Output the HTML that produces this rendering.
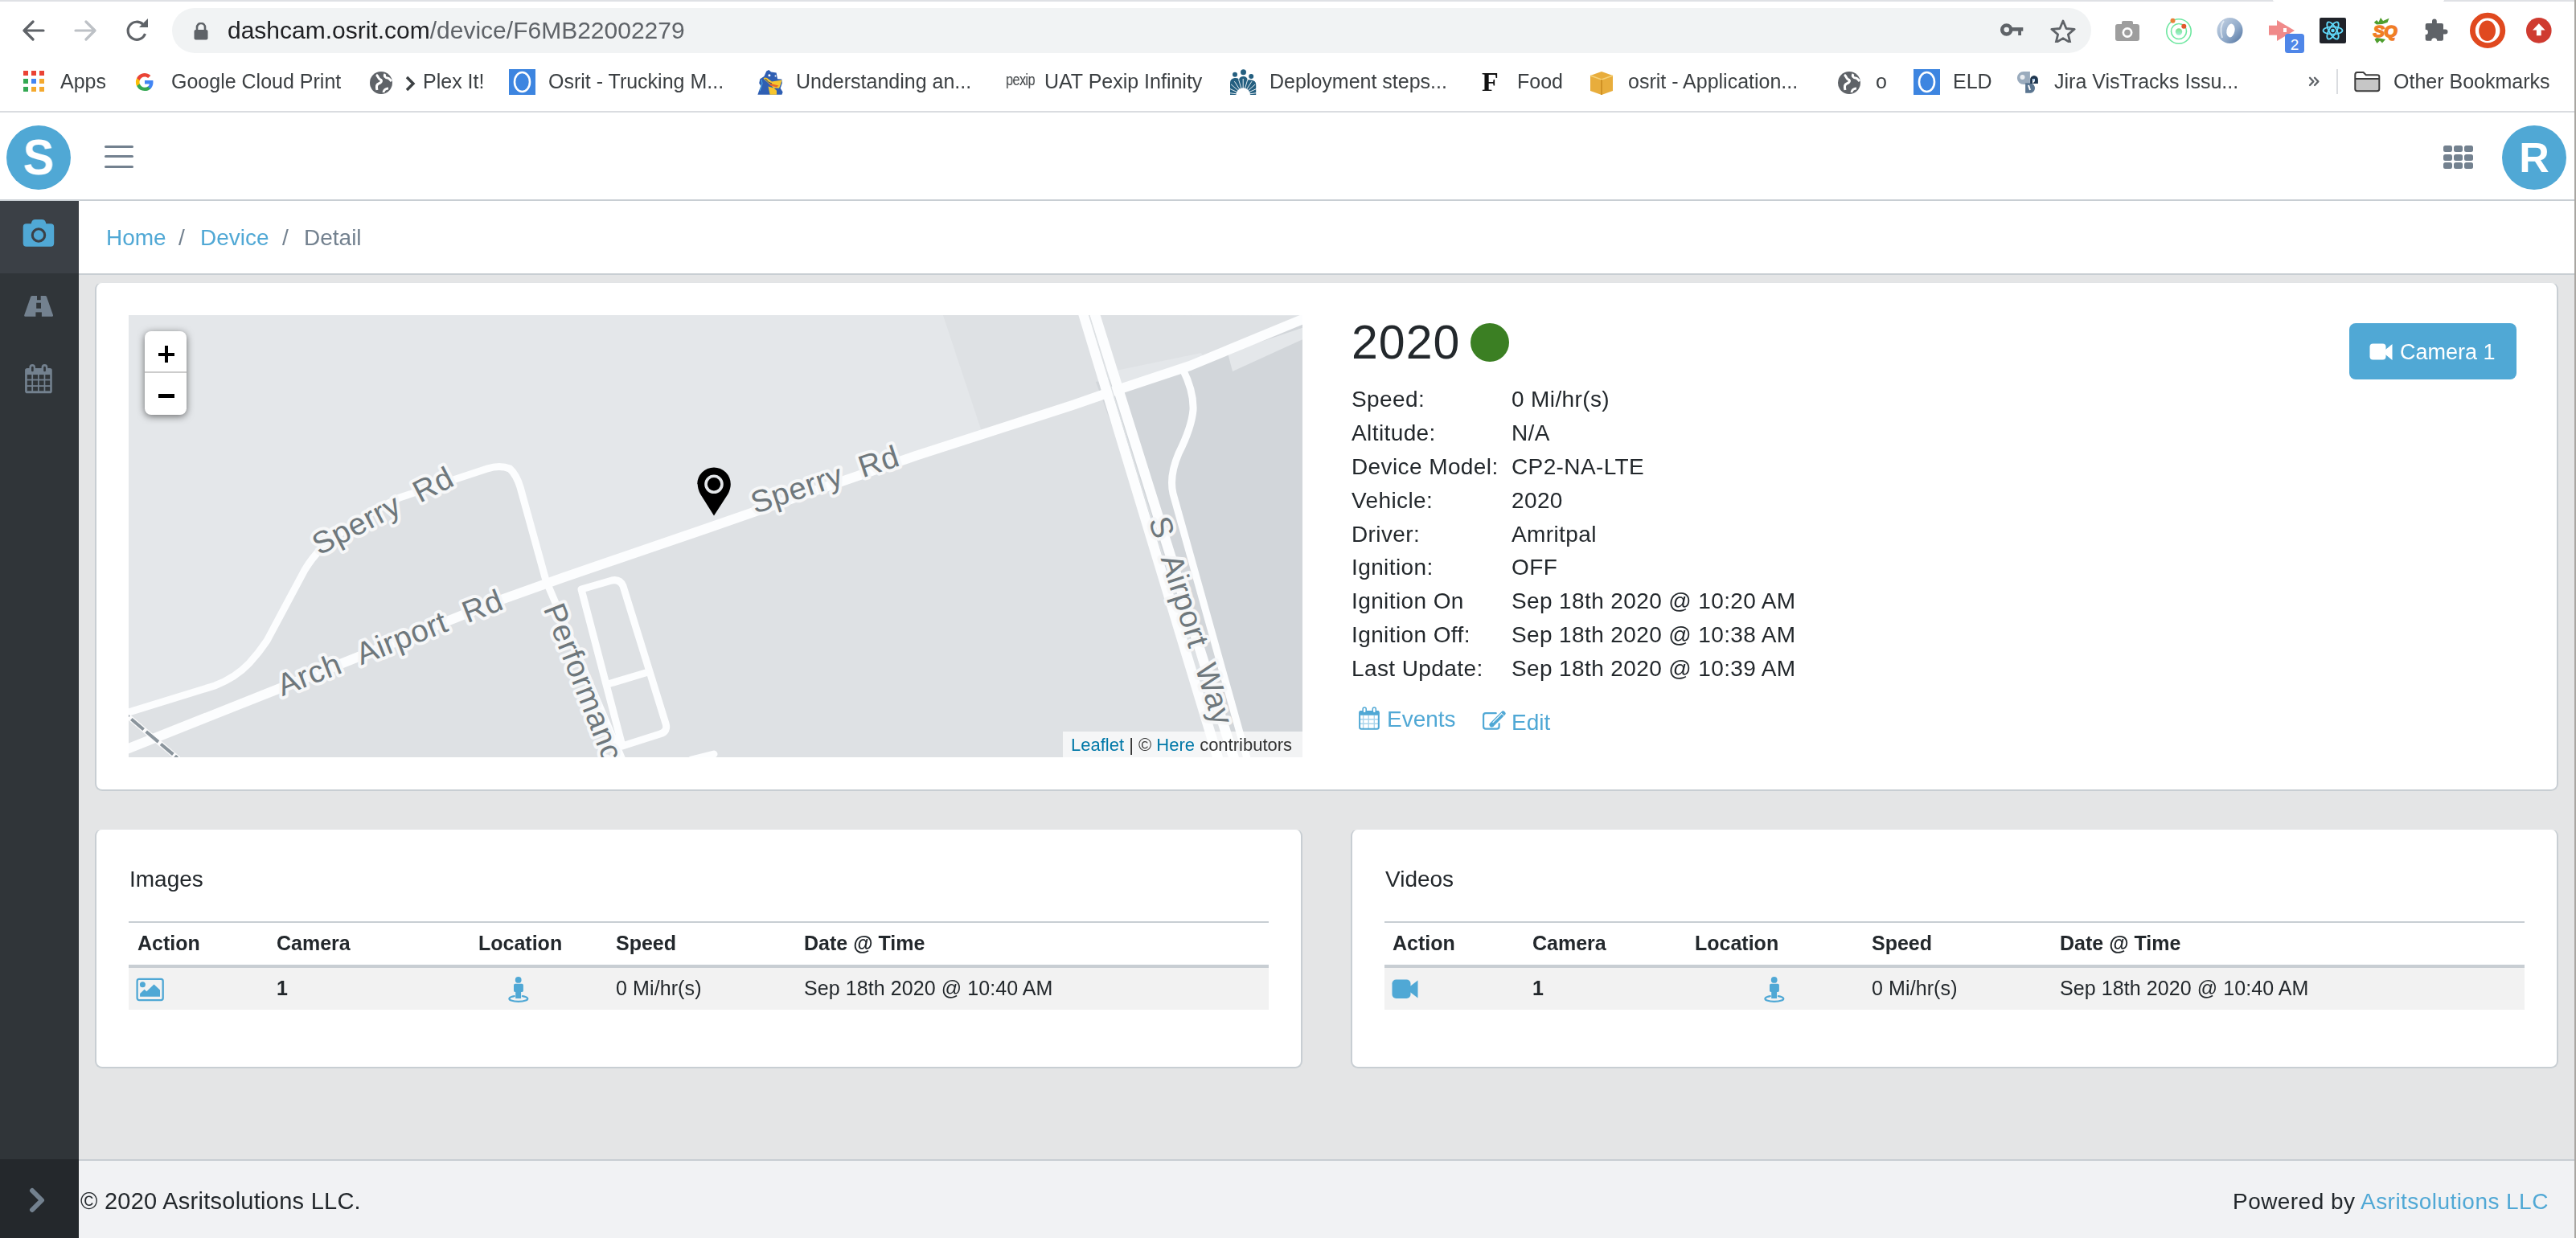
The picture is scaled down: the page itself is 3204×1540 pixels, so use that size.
<!DOCTYPE html>
<html><head><meta charset="utf-8"><title>Device Detail</title>
<style>
html,body{margin:0;padding:0;}
body{width:3204px;height:1540px;position:relative;overflow:hidden;background:#fff;font-family:"Liberation Sans",sans-serif;}
div{-webkit-font-smoothing:antialiased;}
</style></head><body>
<div style="position:absolute;left:0px;top:0px;width:3204px;height:2px;background:#dfe1e5;"></div>
<div style="position:absolute;left:2827px;top:0px;width:213px;height:2px;background:#fff;border-radius:0 0 2px 2px"></div>
<svg style="position:absolute;left:28px;top:25px;" width="28" height="26" viewBox="0 0 28 26"><path d="M26 13H3M13 2L2 13l11 11" fill="none" stroke="#5f6368" stroke-width="3.2" stroke-linecap="round" stroke-linejoin="round"/></svg>
<svg style="position:absolute;left:92px;top:25px;" width="28" height="26" viewBox="0 0 28 26"><path d="M2 13h23M15 2l11 11-11 11" fill="none" stroke="#bdc1c6" stroke-width="3.2" stroke-linecap="round" stroke-linejoin="round"/></svg>
<svg style="position:absolute;left:156px;top:23px;" width="30" height="30" viewBox="0 0 30 30"><path d="M24.5 19A11 11 0 1 1 22 7.5" fill="none" stroke="#5f6368" stroke-width="3.2"/><path d="M17 11L28 11 28 0Z" fill="#5f6368"/></svg>
<div style="position:absolute;left:214px;top:10px;width:2387px;height:56px;background:#f1f3f4;border-radius:28px"></div>
<svg style="position:absolute;left:241px;top:28px;" width="18" height="22" viewBox="0 0 18 22"><path d="M4 9V6a5 5 0 0 1 10 0v3" fill="none" stroke="#5f6368" stroke-width="2.6"/><rect x="0.5" y="9" width="17" height="12.5" rx="2" fill="#5f6368"/></svg>
<div style="position:absolute;left:283px;top:22.61px;font-size:30px;line-height:30px;color:#202124;font-weight:400;white-space:nowrap;font-family:'Liberation Sans', sans-serif;will-change:transform;"><span style="color:#202124">dashcam.osrit.com</span><span style="color:#5f6368">/device/F6MB22002279</span></div>
<svg style="position:absolute;left:2486px;top:28px;" width="32" height="20" viewBox="0 0 32 20"><circle cx="9.7" cy="8.9" r="5.5" fill="none" stroke="#5f6368" stroke-width="4.5"/><rect x="14.3" y="6.1" width="16" height="4.6" fill="#5f6368"/><rect x="24.2" y="10" width="3.8" height="6" fill="#5f6368"/></svg>
<svg style="position:absolute;left:2549px;top:23px;" width="34" height="30" viewBox="0 0 34 30"><path d="M17 3l4 9.5 10.2.8-7.8 6.6 2.4 10L17 24.6 8.2 29.9l2.4-10L2.8 13.3 13 12.5z" fill="none" stroke="#5f6368" stroke-width="2.8" stroke-linejoin="round"/></svg>
<svg style="position:absolute;left:2630px;top:25px;" width="32" height="27" viewBox="0 0 32 27"><rect x="1" y="5" width="30" height="21" rx="3" fill="#9e9e9e"/><rect x="9" y="1" width="14" height="6" rx="2" fill="#9e9e9e"/><circle cx="16" cy="15.5" r="6.5" fill="#fff"/><circle cx="16" cy="15.5" r="3.8" fill="#9e9e9e"/></svg>
<svg style="position:absolute;left:2692px;top:21px;" width="36" height="36" viewBox="0 0 36 36"><defs><linearGradient id="gg" x1="0" y1="0" x2="0" y2="1"><stop offset="0" stop-color="#7de08a"/><stop offset="1" stop-color="#9ff0d8"/></linearGradient></defs><circle cx="18" cy="18" r="15.2" fill="none" stroke="#6ee7a0" stroke-width="1.6"/><circle cx="18" cy="18" r="9.5" fill="none" stroke="#6ee7a0" stroke-width="1.6"/><circle cx="18" cy="18.5" r="4.2" fill="url(#gg)"/><circle cx="10.5" cy="4.8" r="3" fill="#e8823a"/><circle cx="24.3" cy="11.8" r="3" fill="#e2582e"/></svg>
<svg style="position:absolute;left:2756px;top:21px;" width="36" height="34" viewBox="0 0 36 34"><defs><linearGradient id="bo" x1="0" y1="0" x2="1" y2="1"><stop offset="0" stop-color="#c9d6e6"/><stop offset="0.6" stop-color="#8ea8c8"/><stop offset="1" stop-color="#4d6f9c"/></linearGradient></defs><ellipse cx="17.5" cy="17" rx="16" ry="16" fill="url(#bo)"/><ellipse cx="18.5" cy="17" rx="5" ry="8.5" fill="#fff" transform="rotate(10 18.5 17)"/><path d="M10 5Q4 12 8 26" stroke="#eef3f9" stroke-width="2" fill="none" opacity="0.7"/></svg>
<svg style="position:absolute;left:2820px;top:24px;" width="50" height="44" viewBox="0 0 50 44"><rect x="2" y="7.7" width="10" height="12" fill="#f08a8a"/><path d="M12 1L34 14 12 27Z" fill="#f08a8a"/><rect x="20" y="11" width="4" height="5" fill="#fff"/><rect x="22" y="17.9" width="24" height="24" rx="3.5" fill="#4f86e8"/><text x="34" y="37.5" font-family="Liberation Sans" font-size="19" font-weight="400" fill="#fff" text-anchor="middle">2</text></svg>
<svg style="position:absolute;left:2885px;top:22px;" width="33" height="32" viewBox="0 0 33 32"><rect width="33" height="32" rx="2" fill="#20232a"/><g fill="none" stroke="#61dafb" stroke-width="1.8"><ellipse cx="16.5" cy="16" rx="12" ry="4.6"/><ellipse cx="16.5" cy="16" rx="12" ry="4.6" transform="rotate(60 16.5 16)"/><ellipse cx="16.5" cy="16" rx="12" ry="4.6" transform="rotate(-60 16.5 16)"/></g><circle cx="16.5" cy="16" r="2.3" fill="#61dafb"/></svg>
<svg style="position:absolute;left:2950px;top:21px;" width="36" height="34" viewBox="0 0 36 34"><path d="M2.8 7L6 4 8.5 6.5 11 0.9 14 5 21.5 1.7 19.5 7 13 9 6 9.5Z" fill="#4f9e2e"/><path d="M3.5 28L6.5 33 10 29.5 13 32.5 17 28 12 27 6 26Z" fill="#4f9e2e"/><text x="16.5" y="24.5" font-family="Liberation Sans" font-size="21" font-weight="700" font-style="italic" fill="#f07e26" stroke="#f07e26" stroke-width="1.6" text-anchor="middle" letter-spacing="-0.5">SQ</text></svg>
<svg style="position:absolute;left:3015px;top:23px;" width="30" height="30" viewBox="0 0 30 30"><path d="M1.7 8Q1.7 5.9 3.8 5.9H10V3.5A2.9 2.9 0 0 1 15.8 3.5V5.9H21.9Q24 5.9 24 8V13.6H26.5A3 3 0 0 1 26.5 19.6H24V25.7Q24 27.8 21.9 27.8H16.2A3.5 3.5 0 0 0 9.2 27.8H3.8Q1.7 27.8 1.7 25.7V20.1A3.2 3.2 0 0 0 1.7 13.7Z" fill="#5f6368"/></svg>
<svg style="position:absolute;left:3070px;top:15px;" width="48" height="46" viewBox="0 0 48 46"><circle cx="24.1" cy="22.9" r="18.7" fill="none" stroke="#e0491f" stroke-width="6.8"/><ellipse cx="23.6" cy="23.2" rx="10.4" ry="12.7" fill="#e0491f"/></svg>
<svg style="position:absolute;left:3140px;top:21px;" width="35" height="34" viewBox="0 0 35 34"><circle cx="17.8" cy="16.9" r="15.8" fill="#cf3b30"/><path d="M17.8 8.3l-7.8 8.2h4.9v6.8h5.8v-6.8h4.9z" fill="#fff"/></svg>
<svg style="position:absolute;left:29px;top:88px;" width="26" height="26" viewBox="0 0 26 26"><rect x="0" y="0" width="6" height="6" fill="#ea4335"/><rect x="10" y="0" width="6" height="6" fill="#ea4335"/><rect x="20" y="0" width="6" height="6" fill="#ea4335"/><rect x="0" y="10" width="6" height="6" fill="#34a853"/><rect x="10" y="10" width="6" height="6" fill="#4285f4"/><rect x="20" y="10" width="6" height="6" fill="#f4a92f"/><rect x="0" y="20" width="6" height="6" fill="#34a853"/><rect x="10" y="20" width="6" height="6" fill="#f4a92f"/><rect x="20" y="20" width="6" height="6" fill="#f4a92f"/></svg>
<div style="position:absolute;left:75px;top:88.84px;font-size:25px;line-height:25px;color:#3c4043;font-weight:400;white-space:nowrap;font-family:'Liberation Sans', sans-serif;will-change:transform;">Apps</div>
<svg style="position:absolute;left:167px;top:89px;" width="26" height="26" viewBox="0 0 26 26"><path d="M23.5 13.3c0-.8-.1-1.6-.2-2.3H13v4.4h5.9a5 5 0 0 1-2.2 3.3v2.7h3.6c2.1-1.9 3.2-4.8 3.2-8.1z" fill="#4285f4"/><path d="M13 24c3 0 5.5-1 7.3-2.6l-3.6-2.7c-1 .7-2.2 1.1-3.7 1.1-2.9 0-5.3-1.9-6.2-4.5H3.1v2.8A11 11 0 0 0 13 24z" fill="#34a853"/><path d="M6.8 15.3a6.6 6.6 0 0 1 0-4.2V8.3H3.1a11 11 0 0 0 0 9.8z" fill="#fbbc05"/><path d="M13 6.4c1.6 0 3.1.6 4.2 1.7l3.2-3.2A11 11 0 0 0 3.1 8.3l3.7 2.8C7.7 8.4 10.1 6.4 13 6.4z" fill="#ea4335"/></svg>
<div style="position:absolute;left:213px;top:88.84px;font-size:25px;line-height:25px;color:#3c4043;font-weight:400;white-space:nowrap;font-family:'Liberation Sans', sans-serif;will-change:transform;">Google Cloud Print</div>
<svg style="position:absolute;left:459px;top:88px;" width="30" height="30" viewBox="0 0 30 30"><circle cx="15" cy="15" r="14" fill="#5f6368"/><path d="M9 5c3 2 2 5 5 6s1 4-2 5-3 4-2 8M20 4c-2 3 1 5 3 5s3 2 5 4M18 27c0-3 3-5 6-5" stroke="#fff" stroke-width="3" fill="none"/></svg>
<svg style="position:absolute;left:503px;top:94px;" width="14" height="20" viewBox="0 0 14 20"><path d="M3 2l8 8-8 8" fill="none" stroke="#3c4043" stroke-width="3.4"/></svg>
<div style="position:absolute;left:526px;top:88.84px;font-size:25px;line-height:25px;color:#3c4043;font-weight:400;white-space:nowrap;font-family:'Liberation Sans', sans-serif;will-change:transform;">Plex It!</div>
<svg style="position:absolute;left:633px;top:86px;" width="33" height="32" viewBox="0 0 33 32"><rect width="33" height="32" fill="#3d85e0"/><ellipse cx="16.5" cy="16" rx="9.5" ry="12" fill="none" stroke="#fff" stroke-width="2.6"/></svg>
<div style="position:absolute;left:682px;top:88.84px;font-size:25px;line-height:25px;color:#3c4043;font-weight:400;white-space:nowrap;font-family:'Liberation Sans', sans-serif;will-change:transform;">Osrit - Trucking M...</div>
<svg style="position:absolute;left:942px;top:86px;" width="32" height="33" viewBox="0 0 32 33"><path d="M0.4 31.8L2 27 4.4 21 2.2 17.6 3.3 12.2 8.4 8.9 11.3 2.4 14.2 0.9 17.1 3.5 23.6 4.5 25.1 12.2 30.2 12.5 30.9 17.3 28.7 23.8 31.6 28.5 30.5 31.8Z" fill="#2f5fb3"/><path d="M3 27L6 18 5 13" stroke="#4aa3e0" stroke-width="1.2" fill="none"/><path d="M7.6 11.8Q9 9.5 12 11L18 15.5 30.5 13.6 29 19 27 23.8Q20 24 13.5 21.6L15.6 31.8H24V26.7" fill="#f7c62f"/><path d="M14.2 17.3L26.5 20.5 24 22.4 16 20.5Z" fill="#e8672a"/><circle cx="14.9" cy="7.8" r="1.5" fill="#fff"/><circle cx="22.5" cy="8.5" r="1" fill="#fff"/><path d="M10 12Q13 17 18 18" stroke="#1d3f7a" stroke-width="1" fill="none"/></svg>
<div style="position:absolute;left:990px;top:88.84px;font-size:25px;line-height:25px;color:#3c4043;font-weight:400;white-space:nowrap;font-family:'Liberation Sans', sans-serif;will-change:transform;">Understanding an...</div>
<div style="position:absolute;left:1251px;top:89.07px;font-size:20px;line-height:20px;color:#3c4043;font-weight:400;white-space:nowrap;font-family:'Liberation Sans', sans-serif;will-change:transform;letter-spacing:-0.8px;transform:scaleX(0.82);transform-origin:left">pexip</div>
<div style="position:absolute;left:1299px;top:88.84px;font-size:25px;line-height:25px;color:#3c4043;font-weight:400;white-space:nowrap;font-family:'Liberation Sans', sans-serif;will-change:transform;">UAT Pexip Infinity</div>
<svg style="position:absolute;left:1530px;top:86px;" width="33" height="33" viewBox="0 0 33 33"><g fill="#245f80"><circle cx="6" cy="6.7" r="3"/><circle cx="16.5" cy="3.8" r="3.5"/><circle cx="26.2" cy="8.9" r="3"/><path d="M0 32V17Q0 12 5.6 11.1Q10 10.5 11 13Q12 9 16.5 8.9Q21 9 22 13.5Q24 13 26.4 13.6Q32.2 14.5 32.2 19V32H24.9A8.7 8.7 0 0 0 7.5 32Z"/></g><path d="M16.2 32L-3.6 29.2M16.2 32L-2.0 23.7M16.2 32L1.1 18.9M16.2 32L5.4 15.2M16.2 32L10.6 12.8M16.2 32L16.2 12.0M16.2 32L21.8 12.8M16.2 32L27.0 15.2M16.2 32L31.3 18.9M16.2 32L34.4 23.7M16.2 32L36.0 29.2" stroke="#fff" stroke-width="0.9"/></svg>
<div style="position:absolute;left:1579px;top:88.84px;font-size:25px;line-height:25px;color:#3c4043;font-weight:400;white-space:nowrap;font-family:'Liberation Sans', sans-serif;will-change:transform;">Deployment steps...</div>
<div style="position:absolute;left:1843px;top:85.22px;font-size:34px;line-height:34px;color:#111;font-weight:700;white-space:nowrap;font-family:'Liberation Serif', serif;will-change:transform;">F</div>
<div style="position:absolute;left:1887px;top:88.84px;font-size:25px;line-height:25px;color:#3c4043;font-weight:400;white-space:nowrap;font-family:'Liberation Sans', sans-serif;will-change:transform;">Food</div>
<svg style="position:absolute;left:1977px;top:88px;" width="30" height="30" viewBox="0 0 30 30"><path d="M1 6L15 1 29 6v19L15 30 1 25z" fill="#e8ad3c"/><path d="M1 6l14 5 14-5" fill="none" stroke="#f6d27a" stroke-width="1.5"/><path d="M15 11v19" stroke="#c98a1d" stroke-width="1.5"/></svg>
<div style="position:absolute;left:2025px;top:88.84px;font-size:25px;line-height:25px;color:#3c4043;font-weight:400;white-space:nowrap;font-family:'Liberation Sans', sans-serif;will-change:transform;">osrit - Application...</div>
<svg style="position:absolute;left:2285px;top:88px;" width="30" height="30" viewBox="0 0 30 30"><circle cx="15" cy="15" r="14" fill="#5f6368"/><path d="M9 5c3 2 2 5 5 6s1 4-2 5-3 4-2 8M20 4c-2 3 1 5 3 5s3 2 5 4M18 27c0-3 3-5 6-5" stroke="#fff" stroke-width="3" fill="none"/></svg>
<div style="position:absolute;left:2333px;top:88.84px;font-size:25px;line-height:25px;color:#3c4043;font-weight:400;white-space:nowrap;font-family:'Liberation Sans', sans-serif;will-change:transform;">o</div>
<svg style="position:absolute;left:2380px;top:86px;" width="33" height="32" viewBox="0 0 33 32"><rect width="33" height="32" fill="#3d85e0"/><ellipse cx="16.5" cy="16" rx="9.5" ry="12" fill="none" stroke="#fff" stroke-width="2.6"/></svg>
<div style="position:absolute;left:2429px;top:88.84px;font-size:25px;line-height:25px;color:#3c4043;font-weight:400;white-space:nowrap;font-family:'Liberation Sans', sans-serif;will-change:transform;">ELD</div>
<svg style="position:absolute;left:2507px;top:87px;" width="30" height="30" viewBox="0 0 30 30"><path d="M1.9 10A8.1 8.1 0 0 0 10 18.1H17.9V1.9H10A8.1 8.1 0 0 0 1.9 10Z" fill="#9aabbd"/><circle cx="8.5" cy="9" r="3" fill="#fff" opacity="0.8"/><path d="M12.1 16.3V28.8H18.5A6.3 6.3 0 0 0 18.5 16.3Z" fill="#5a7590"/><path d="M16 19L18 25" stroke="#fff" stroke-width="2"/><path d="M27.9 17H18.1V12A5 5 0 0 1 23 7H23A5 5 0 0 1 27.9 12Z" fill="#1f3750"/><path d="M21 11H24V14L21 17Z" fill="#fff"/><rect x="22" y="11.5" width="1.6" height="1.6" fill="#4a90e2"/></svg>
<div style="position:absolute;left:2555px;top:88.84px;font-size:25px;line-height:25px;color:#3c4043;font-weight:400;white-space:nowrap;font-family:'Liberation Sans', sans-serif;will-change:transform;">Jira VisTracks Issu...</div>
<svg style="position:absolute;left:2871px;top:95px;" width="16" height="14" viewBox="0 0 16 14"><path d="M2 1.8L6.4 6.4 2 11M8 1.8L12.4 6.4 8 11" fill="none" stroke="#5f6368" stroke-width="2.3" stroke-linecap="round" stroke-linejoin="round"/></svg>
<div style="position:absolute;left:2906px;top:86px;width:2px;height:31px;background:#dadce0;"></div>
<svg style="position:absolute;left:2927px;top:88px;" width="34" height="27" viewBox="0 0 34 27"><path d="M2.3 10H32.3V22.8Q32.3 25.2 29.8 25.2H4.8Q2.3 25.2 2.3 22.8Z" fill="#c6c6c6"/><path d="M2.3 5Q2.3 2 5 2H12.5L15.8 5.2H29.8Q32.3 5.2 32.3 7.5V22.8Q32.3 25.2 29.8 25.2H4.8Q2.3 25.2 2.3 22.8Z" fill="none" stroke="#3c3c3c" stroke-width="2" stroke-linejoin="round"/><path d="M2.3 10H32.3" stroke="#3c3c3c" stroke-width="2"/></svg>
<div style="position:absolute;left:2977px;top:88.84px;font-size:25px;line-height:25px;color:#3c4043;font-weight:400;white-space:nowrap;font-family:'Liberation Sans', sans-serif;will-change:transform;">Other Bookmarks</div>
<div style="position:absolute;left:0px;top:138px;width:3204px;height:2px;background:#dadce0;"></div>
<div style="position:absolute;left:0px;top:248px;width:3202px;height:2px;background:#c8ced3;"></div>
<div style="position:absolute;left:8px;top:156px;width:80px;height:80px;border-radius:50%;background:#50a8d5"></div>
<div style="position:absolute;left:8px;top:164.17px;font-size:63px;line-height:63px;color:#fff;font-weight:700;white-space:nowrap;font-family:'Liberation Sans', sans-serif;will-change:transform;width:80px;text-align:center;transform:scaleX(0.92)">S</div>
<div style="position:absolute;left:129.7px;top:181.3px;width:36.400000000000006px;height:3.1999999999999886px;background:#73818f;border-radius:2px"></div>
<div style="position:absolute;left:129.7px;top:193.3px;width:36.400000000000006px;height:3.1999999999999886px;background:#73818f;border-radius:2px"></div>
<div style="position:absolute;left:129.7px;top:205.8px;width:36.400000000000006px;height:3.1999999999999886px;background:#73818f;border-radius:2px"></div>
<div style="position:absolute;left:3039.0px;top:181.0px;width:10.5px;height:8.0px;background:#73818f;border-radius:2.5px"></div>
<div style="position:absolute;left:3052.2px;top:181.0px;width:10.5px;height:8.0px;background:#73818f;border-radius:2.5px"></div>
<div style="position:absolute;left:3065.4px;top:181.0px;width:10.5px;height:8.0px;background:#73818f;border-radius:2.5px"></div>
<div style="position:absolute;left:3039.0px;top:191.6px;width:10.5px;height:8.0px;background:#73818f;border-radius:2.5px"></div>
<div style="position:absolute;left:3052.2px;top:191.6px;width:10.5px;height:8.0px;background:#73818f;border-radius:2.5px"></div>
<div style="position:absolute;left:3065.4px;top:191.6px;width:10.5px;height:8.0px;background:#73818f;border-radius:2.5px"></div>
<div style="position:absolute;left:3039.0px;top:202.2px;width:10.5px;height:8.0px;background:#73818f;border-radius:2.5px"></div>
<div style="position:absolute;left:3052.2px;top:202.2px;width:10.5px;height:8.0px;background:#73818f;border-radius:2.5px"></div>
<div style="position:absolute;left:3065.4px;top:202.2px;width:10.5px;height:8.0px;background:#73818f;border-radius:2.5px"></div>
<div style="position:absolute;left:3112px;top:156px;width:80px;height:80px;border-radius:50%;background:#50a8d5"></div>
<div style="position:absolute;left:3112px;top:169.98px;font-size:52px;line-height:52px;color:#fff;font-weight:700;white-space:nowrap;font-family:'Liberation Sans', sans-serif;will-change:transform;width:80px;text-align:center">R</div>
<div style="position:absolute;left:0px;top:250px;width:98px;height:1290px;background:#303539;"></div>
<div style="position:absolute;left:0px;top:250px;width:98px;height:90px;background:#3b4046;"></div>
<div style="position:absolute;left:0px;top:1442px;width:98px;height:98px;background:#24282c;"></div>
<div style="position:absolute;left:98px;top:250px;width:3104px;height:90px;background:#fff;"></div>
<div style="position:absolute;left:98px;top:340px;width:3104px;height:2px;background:#c8ced3;"></div>
<div style="position:absolute;left:98px;top:342px;width:3104px;height:1100px;background:#e4e5e6;"></div>
<div style="position:absolute;left:98px;top:1442px;width:3104px;height:2px;background:#c8ced3;"></div>
<div style="position:absolute;left:98px;top:1444px;width:3104px;height:96px;background:#f1f2f4;"></div>
<div style="position:absolute;left:3202px;top:0px;width:2px;height:1540px;background:#a9a6a2;"></div>
<div style="position:absolute;left:118px;top:351px;width:3064px;height:633px;background:#fff;border:2px solid #c8ced3;border-top:1px solid #e2e4e6;border-radius:9px;box-sizing:border-box"></div>
<div style="position:absolute;left:118px;top:1031px;width:1502px;height:298px;background:#fff;border:2px solid #c8ced3;border-top:1px solid #e2e4e6;border-radius:9px;box-sizing:border-box"></div>
<div style="position:absolute;left:1680px;top:1031px;width:1502px;height:298px;background:#fff;border:2px solid #c8ced3;border-top:1px solid #e2e4e6;border-radius:9px;box-sizing:border-box"></div>
<svg style="position:absolute;left:28px;top:272px;" width="40" height="36" viewBox="0 0 40 36"><path d="M10.8 6.3Q11.5 0.9 16 0.9H24Q28.6 0.9 29.3 6.3H35Q39.2 6.3 39.2 10.5V30.6Q39.2 34.8 35 34.8H4.9Q0.7 34.8 0.7 30.6V10.5Q0.7 6.3 4.9 6.3Z" fill="#50a8d5"/><circle cx="20" cy="20.5" r="7.7" fill="none" stroke="#3b4046" stroke-width="3.1"/></svg>
<svg style="position:absolute;left:29px;top:367px;" width="38" height="28" viewBox="0 0 38 28"><path d="M11 1.1H27.3Q28.5 1.1 29 2.2L37 25Q37.3 26.7 36 26.7H2.3Q0.7 26.7 1.2 25L9.2 2.2Q9.7 1.1 11 1.1Z" fill="#73818f"/><rect x="17" y="0" width="4.7" height="6.2" fill="#303539"/><rect x="16.2" y="9.7" width="5.8" height="7" fill="#303539"/><rect x="15.4" y="21.4" width="7.5" height="6" fill="#303539"/></svg>
<svg style="position:absolute;left:30px;top:452px;" width="36" height="38" viewBox="0 0 36 38"><rect x="1.1" y="6.1" width="33.7" height="31.1" rx="2.8" fill="#73818f"/><rect x="3.8" y="14.1" width="5.5" height="5.5" fill="#303539"/><rect x="3.8" y="21.4" width="5.5" height="5.8" fill="#303539"/><rect x="3.8" y="29" width="5.5" height="5.3" fill="#303539"/><rect x="11.1" y="14.1" width="5.9" height="5.5" fill="#303539"/><rect x="11.1" y="21.4" width="5.9" height="5.8" fill="#303539"/><rect x="11.1" y="29" width="5.9" height="5.3" fill="#303539"/><rect x="18.7" y="14.1" width="5.9" height="5.5" fill="#303539"/><rect x="18.7" y="21.4" width="5.9" height="5.8" fill="#303539"/><rect x="18.7" y="29" width="5.9" height="5.3" fill="#303539"/><rect x="26.3" y="14.1" width="5.9" height="5.5" fill="#303539"/><rect x="26.3" y="21.4" width="5.9" height="5.8" fill="#303539"/><rect x="26.3" y="29" width="5.9" height="5.3" fill="#303539"/><rect x="6.4" y="0.9" width="7.6" height="9.9" rx="3.8" fill="#73818f"/><rect x="9" y="3.8" width="2.7" height="6.4" rx="1.3" fill="#303539"/><rect x="21.6" y="0.9" width="7.7" height="9.9" rx="3.8" fill="#73818f"/><rect x="24.2" y="3.8" width="2.7" height="6.4" rx="1.3" fill="#303539"/></svg>
<svg style="position:absolute;left:36px;top:1477px;" width="22" height="32" viewBox="0 0 22 32"><path d="M4 4L16 16 4 28" fill="none" stroke="#73818f" stroke-width="6" stroke-linecap="round" stroke-linejoin="round"/></svg>
<div style="position:absolute;left:132px;top:282.30px;font-size:28px;line-height:28px;color:#50a8d5;font-weight:400;white-space:nowrap;font-family:'Liberation Sans', sans-serif;will-change:transform;">Home</div>
<div style="position:absolute;left:222px;top:282.30px;font-size:28px;line-height:28px;color:#73818f;font-weight:400;white-space:nowrap;font-family:'Liberation Sans', sans-serif;will-change:transform;">/</div>
<div style="position:absolute;left:249px;top:282.30px;font-size:28px;line-height:28px;color:#50a8d5;font-weight:400;white-space:nowrap;font-family:'Liberation Sans', sans-serif;will-change:transform;">Device</div>
<div style="position:absolute;left:351px;top:282.30px;font-size:28px;line-height:28px;color:#73818f;font-weight:400;white-space:nowrap;font-family:'Liberation Sans', sans-serif;will-change:transform;">/</div>
<div style="position:absolute;left:378px;top:282.30px;font-size:28px;line-height:28px;color:#73818f;font-weight:400;white-space:nowrap;font-family:'Liberation Sans', sans-serif;will-change:transform;">Detail</div>
<div style="position:absolute;left:160px;top:392px;width:1460px;height:550px;background:#e4e7ea;overflow:hidden"><svg width="1460" height="550" viewBox="0 0 1460 550" style="position:absolute;left:0;top:0"><path d="M-5 494 L107 461 L144 440 L169 414 L219 317 L237.6 292 L337 227 L446 190 L462 187 L480 199 L487 221 L519 342 L-5 545Z" fill="#dee1e4"/><path d="M-5 541 L182 466.6 L461.6 354.6 L540 326.6 L720 265 L980 174.6 L1174 112 L1210 99.5 L1240 90 L1375 560 L-5 560Z" fill="#dee1e4"/><path d="M1012.6 -1 L1062 148 L1174 112 L1210 99.5 L1320 63 L1465 1 Z" fill="#dee1e4"/><path d="M1203 83 L1320 61 L1465 2 L1465 560 L1378 560 Z" fill="#d2d6da"/><path d="M1228 69 L1334 47 L1340 58 L1234 86Z" fill="#e4e7ea"/><path d="M1367 47 L1465 14 L1465 28 L1373 70Z" fill="#e4e7ea"/><path d="M-10 543 L182 466.6 L461.6 354.6 L540 326.6 L720 265 L980 174.6 L1174 112 L1210 99.5 L1320 63 L1470 1" fill="none" stroke="#fcfdfe" stroke-linecap="round" stroke-linejoin="round" stroke-width="12"/><path d="M-10 497 L107 461 Q133 451 150 433 Q162 420 172 405 L219 317 Q228 302 240 290 Q280 255 337 227 L446 191 Q462 186 474 191 Q482 198 487 214 L519 330 L614 553" fill="none" stroke="#fcfdfe" stroke-linecap="round" stroke-linejoin="round" stroke-width="9"/><path d="M563 341 L601 330 Q611 328 615 337 L668 508 Q671 518 661 521 L614 536 L563 341Z" fill="none" stroke="#fcfdfe" stroke-linecap="round" stroke-linejoin="round" stroke-width="9"/><path d="M596 459 L643 445" fill="none" stroke="#fcfdfe" stroke-linecap="round" stroke-linejoin="round" stroke-width="9"/><path d="M1186.4 -5 L1356 555" fill="none" stroke="#fcfdfe" stroke-linecap="round" stroke-linejoin="round" stroke-width="12.5"/><path d="M1200.5 -5 L1376 555" fill="none" stroke="#fcfdfe" stroke-linecap="round" stroke-linejoin="round" stroke-width="12.5"/><path d="M1193 -5 L1365 555" fill="none" stroke="#dde1e4" stroke-width="1.3"/><path d="M1311 67 Q1325 95 1324 118 Q1322 140 1306 172 Q1294 200 1299 222 L1392 555" fill="none" stroke="#fcfdfe" stroke-linecap="round" stroke-linejoin="round" stroke-width="9"/><path d="M700 553 L728 546" fill="none" stroke="#fcfdfe" stroke-linecap="round" stroke-linejoin="round" stroke-width="9"/><path d="M-2 498 L62 552" stroke="#fbfbfc" stroke-width="6.5" fill="none"/><path d="M-2 498 L62 552" stroke="#8a949c" stroke-width="4" stroke-dasharray="3 4 20 4 20 4 20" fill="none"/><text x="316" y="243" font-size="38.5" font-family="Liberation Sans, sans-serif" fill="#6e777c" stroke="#f6f7f8" stroke-width="8" paint-order="stroke" stroke-linejoin="round" dominant-baseline="central" text-anchor="middle" transform="rotate(-27.5 316 243)" letter-spacing="0.8">Sperry&#160;&#160;Rd</text><text x="325" y="407" font-size="38.5" font-family="Liberation Sans, sans-serif" fill="#6e777c" stroke="#f6f7f8" stroke-width="8" paint-order="stroke" stroke-linejoin="round" dominant-baseline="central" text-anchor="middle" transform="rotate(-21.5 325 407)" letter-spacing="0.8">Arch&#160;&#160;Airport&#160;&#160;Rd</text><text x="866" y="204" font-size="38.5" font-family="Liberation Sans, sans-serif" fill="#6e777c" stroke="#f6f7f8" stroke-width="8" paint-order="stroke" stroke-linejoin="round" dominant-baseline="central" text-anchor="middle" transform="rotate(-18.5 866 204)" letter-spacing="0.8">Sperry&#160;&#160;Rd</text><text x="528" y="360" font-size="38.5" font-family="Liberation Sans, sans-serif" fill="#6e777c" stroke="#f6f7f8" stroke-width="8" paint-order="stroke" stroke-linejoin="round" dominant-baseline="central" text-anchor="start" transform="rotate(68.5 528 360)" letter-spacing="0.8">Performance</text><text x="1322" y="380" font-size="38.5" font-family="Liberation Sans, sans-serif" fill="#6e777c" stroke="#f6f7f8" stroke-width="8" paint-order="stroke" stroke-linejoin="round" dominant-baseline="central" text-anchor="middle" transform="rotate(72.5 1322 380)" letter-spacing="0.8">S&#160;&#160;Airport&#160;&#160;Way</text><path d="M728 210.3 m-20.8 0 a20.8 20.8 0 1 1 41.6 0 q0 6 -3.5 12.5 L728 249.4 L711.2 222.8 q-3.5 -6.5 -3.5 -12.5Z" fill="#000"/><circle cx="728" cy="210.3" r="10" fill="none" stroke="#e4e7ea" stroke-width="3.6"/></svg></div>
<div style="position:absolute;left:180px;top:412px;width:52px;height:104px;background:#fff;border-radius:8px;box-shadow:0 2px 10px rgba(0,0,0,0.55)"></div>
<div style="position:absolute;left:180px;top:462px;width:52px;height:2px;background:#cccccc;"></div>
<div style="position:absolute;left:197px;top:438.5px;width:20px;height:4.0px;background:#000;"></div>
<div style="position:absolute;left:205px;top:430px;width:4px;height:21px;background:#000;"></div>
<div style="position:absolute;left:197px;top:490px;width:20px;height:4.5px;background:#000;"></div>
<div style="position:absolute;left:1322px;top:910px;width:298px;height:32px;background:rgba(255,255,255,0.7)"></div>
<div style="position:absolute;left:1332px;top:915.98px;font-size:22px;line-height:22px;color:#333;font-weight:400;white-space:nowrap;font-family:'Liberation Sans', sans-serif;will-change:transform;"><span style="color:#0078a8">Leaflet</span> | &copy; <span style="color:#0078a8">Here</span> contributors</div>
<div style="position:absolute;left:1681px;top:396.76px;font-size:59px;line-height:59px;color:#23282c;font-weight:400;white-space:nowrap;font-family:'Liberation Sans', sans-serif;will-change:transform;letter-spacing:1px">2020</div>
<div style="position:absolute;left:1829px;top:402px;width:48px;height:48px;border-radius:50%;background:#3b7f23"></div>
<div style="position:absolute;left:1681px;top:483.30px;font-size:28px;line-height:28px;color:#23282c;font-weight:400;white-space:nowrap;font-family:'Liberation Sans', sans-serif;will-change:transform;letter-spacing:0.4px">Speed:</div>
<div style="position:absolute;left:1880px;top:483.30px;font-size:28px;line-height:28px;color:#23282c;font-weight:400;white-space:nowrap;font-family:'Liberation Sans', sans-serif;will-change:transform;letter-spacing:0.38px">0 Mi/hr(s)</div>
<div style="position:absolute;left:1681px;top:525.10px;font-size:28px;line-height:28px;color:#23282c;font-weight:400;white-space:nowrap;font-family:'Liberation Sans', sans-serif;will-change:transform;letter-spacing:0.4px">Altitude:</div>
<div style="position:absolute;left:1880px;top:525.10px;font-size:28px;line-height:28px;color:#23282c;font-weight:400;white-space:nowrap;font-family:'Liberation Sans', sans-serif;will-change:transform;letter-spacing:0.38px">N/A</div>
<div style="position:absolute;left:1681px;top:566.90px;font-size:28px;line-height:28px;color:#23282c;font-weight:400;white-space:nowrap;font-family:'Liberation Sans', sans-serif;will-change:transform;letter-spacing:0.4px">Device Model:</div>
<div style="position:absolute;left:1880px;top:566.90px;font-size:28px;line-height:28px;color:#23282c;font-weight:400;white-space:nowrap;font-family:'Liberation Sans', sans-serif;will-change:transform;letter-spacing:0.38px">CP2-NA-LTE</div>
<div style="position:absolute;left:1681px;top:608.70px;font-size:28px;line-height:28px;color:#23282c;font-weight:400;white-space:nowrap;font-family:'Liberation Sans', sans-serif;will-change:transform;letter-spacing:0.4px">Vehicle:</div>
<div style="position:absolute;left:1880px;top:608.70px;font-size:28px;line-height:28px;color:#23282c;font-weight:400;white-space:nowrap;font-family:'Liberation Sans', sans-serif;will-change:transform;letter-spacing:0.38px">2020</div>
<div style="position:absolute;left:1681px;top:650.50px;font-size:28px;line-height:28px;color:#23282c;font-weight:400;white-space:nowrap;font-family:'Liberation Sans', sans-serif;will-change:transform;letter-spacing:0.4px">Driver:</div>
<div style="position:absolute;left:1880px;top:650.50px;font-size:28px;line-height:28px;color:#23282c;font-weight:400;white-space:nowrap;font-family:'Liberation Sans', sans-serif;will-change:transform;letter-spacing:0.38px">Amritpal</div>
<div style="position:absolute;left:1681px;top:692.30px;font-size:28px;line-height:28px;color:#23282c;font-weight:400;white-space:nowrap;font-family:'Liberation Sans', sans-serif;will-change:transform;letter-spacing:0.4px">Ignition:</div>
<div style="position:absolute;left:1880px;top:692.30px;font-size:28px;line-height:28px;color:#23282c;font-weight:400;white-space:nowrap;font-family:'Liberation Sans', sans-serif;will-change:transform;letter-spacing:0.38px">OFF</div>
<div style="position:absolute;left:1681px;top:734.10px;font-size:28px;line-height:28px;color:#23282c;font-weight:400;white-space:nowrap;font-family:'Liberation Sans', sans-serif;will-change:transform;letter-spacing:0.4px">Ignition On</div>
<div style="position:absolute;left:1880px;top:734.10px;font-size:28px;line-height:28px;color:#23282c;font-weight:400;white-space:nowrap;font-family:'Liberation Sans', sans-serif;will-change:transform;letter-spacing:0.38px">Sep 18th 2020 @ 10:20 AM</div>
<div style="position:absolute;left:1681px;top:775.90px;font-size:28px;line-height:28px;color:#23282c;font-weight:400;white-space:nowrap;font-family:'Liberation Sans', sans-serif;will-change:transform;letter-spacing:0.4px">Ignition Off:</div>
<div style="position:absolute;left:1880px;top:775.90px;font-size:28px;line-height:28px;color:#23282c;font-weight:400;white-space:nowrap;font-family:'Liberation Sans', sans-serif;will-change:transform;letter-spacing:0.38px">Sep 18th 2020 @ 10:38 AM</div>
<div style="position:absolute;left:1681px;top:817.70px;font-size:28px;line-height:28px;color:#23282c;font-weight:400;white-space:nowrap;font-family:'Liberation Sans', sans-serif;will-change:transform;letter-spacing:0.4px">Last Update:</div>
<div style="position:absolute;left:1880px;top:817.70px;font-size:28px;line-height:28px;color:#23282c;font-weight:400;white-space:nowrap;font-family:'Liberation Sans', sans-serif;will-change:transform;letter-spacing:0.38px">Sep 18th 2020 @ 10:39 AM</div>
<svg style="position:absolute;left:1690px;top:879px;" width="27" height="30" viewBox="0 0 27 30"><g stroke="#a9d4eb" stroke-width="1.4"><path d="M5.6 10.7V28M12.2 10.7V28M19.3 10.7V28M1.5 15.7H25M1.5 21.3H25"/></g><rect x="1.1" y="6.1" width="23.7" height="21.7" rx="2" fill="none" stroke="#50a8d5" stroke-width="2"/><rect x="0.5" y="5.1" width="25" height="5.6" rx="2" fill="#50a8d5"/><rect x="5.1" y="1" width="4.1" height="6.7" rx="2" fill="#fff" stroke="#50a8d5" stroke-width="1.5"/><rect x="17.3" y="1" width="4" height="6.7" rx="2" fill="#fff" stroke="#50a8d5" stroke-width="1.5"/></svg>
<div style="position:absolute;left:1725px;top:880.80px;font-size:28px;line-height:28px;color:#50a8d5;font-weight:400;white-space:nowrap;font-family:'Liberation Sans', sans-serif;will-change:transform;">Events</div>
<svg style="position:absolute;left:1843px;top:884px;" width="31" height="25" viewBox="0 0 31 25"><path d="M17.7 3.2H5Q2.1 3.2 2.1 6.1V19.8Q2.1 22.7 5 22.7H18.7Q21.6 22.7 21.6 19.8V16.3" fill="none" stroke="#50a8d5" stroke-width="2.2" stroke-linecap="round"/><path d="M12.5 17.5L26.5 3.5" stroke="#50a8d5" stroke-width="6" stroke-linecap="round"/><path d="M13.6 14.8L24.8 3.6" stroke="#fff" stroke-width="1.2"/><path d="M10.3 20.2L11.2 15.6 15 19.4Z" fill="#50a8d5"/><path d="M24 2.8L28 6.8" stroke="#fff" stroke-width="1"/></svg>
<div style="position:absolute;left:1880px;top:884.80px;font-size:28px;line-height:28px;color:#50a8d5;font-weight:400;white-space:nowrap;font-family:'Liberation Sans', sans-serif;will-change:transform;">Edit</div>
<div style="position:absolute;left:2922px;top:402px;width:208px;height:70px;border-radius:8px;background:#50a8d5"></div>
<svg style="position:absolute;left:2947px;top:427px;" width="30" height="22" viewBox="0 0 30 22"><rect x="0.5" y="0.5" width="20" height="20" rx="4" fill="#fff"/><path d="M20 8L28.5 1V21L20 14Z" fill="#fff"/></svg>
<div style="position:absolute;left:2985px;top:425.14px;font-size:27px;line-height:27px;color:#fff;font-weight:400;white-space:nowrap;font-family:'Liberation Sans', sans-serif;will-change:transform;letter-spacing:0px">Camera 1</div>
<div style="position:absolute;left:160.6px;top:1080.30px;font-size:28px;line-height:28px;color:#23282c;font-weight:400;white-space:nowrap;font-family:'Liberation Sans', sans-serif;will-change:transform;">Images</div>
<div style="position:absolute;left:160px;top:1146px;width:1418px;height:2px;background:#c8ced3;"></div>
<div style="position:absolute;left:160px;top:1200px;width:1418px;height:4px;background:#c8ced3;"></div>
<div style="position:absolute;left:160px;top:1204px;width:1418px;height:52px;background:#f2f2f2;"></div>
<div style="position:absolute;left:170.8px;top:1160.84px;font-size:25px;line-height:25px;color:#23282c;font-weight:700;white-space:nowrap;font-family:'Liberation Sans', sans-serif;will-change:transform;letter-spacing:0px">Action</div>
<div style="position:absolute;left:344.4px;top:1160.84px;font-size:25px;line-height:25px;color:#23282c;font-weight:700;white-space:nowrap;font-family:'Liberation Sans', sans-serif;will-change:transform;letter-spacing:0px">Camera</div>
<div style="position:absolute;left:595.3px;top:1160.84px;font-size:25px;line-height:25px;color:#23282c;font-weight:700;white-space:nowrap;font-family:'Liberation Sans', sans-serif;will-change:transform;letter-spacing:0px">Location</div>
<div style="position:absolute;left:766px;top:1160.84px;font-size:25px;line-height:25px;color:#23282c;font-weight:700;white-space:nowrap;font-family:'Liberation Sans', sans-serif;will-change:transform;letter-spacing:0px">Speed</div>
<div style="position:absolute;left:1000.3px;top:1160.84px;font-size:25px;line-height:25px;color:#23282c;font-weight:700;white-space:nowrap;font-family:'Liberation Sans', sans-serif;will-change:transform;letter-spacing:0px">Date @ Time</div>
<div style="position:absolute;left:344.4px;top:1216.84px;font-size:25px;line-height:25px;color:#23282c;font-weight:700;white-space:nowrap;font-family:'Liberation Sans', sans-serif;will-change:transform;">1</div>
<div style="position:absolute;left:766px;top:1216.84px;font-size:25px;line-height:25px;color:#23282c;font-weight:400;white-space:nowrap;font-family:'Liberation Sans', sans-serif;will-change:transform;letter-spacing:0.1px">0 Mi/hr(s)</div>
<div style="position:absolute;left:1000.3px;top:1216.84px;font-size:25px;line-height:25px;color:#23282c;font-weight:400;white-space:nowrap;font-family:'Liberation Sans', sans-serif;will-change:transform;letter-spacing:0.08px">Sep 18th 2020 @ 10:40 AM</div>
<div style="position:absolute;left:1723px;top:1080.30px;font-size:28px;line-height:28px;color:#23282c;font-weight:400;white-space:nowrap;font-family:'Liberation Sans', sans-serif;will-change:transform;">Videos</div>
<div style="position:absolute;left:1722px;top:1146px;width:1418px;height:2px;background:#c8ced3;"></div>
<div style="position:absolute;left:1722px;top:1200px;width:1418px;height:4px;background:#c8ced3;"></div>
<div style="position:absolute;left:1722px;top:1204px;width:1418px;height:52px;background:#f2f2f2;"></div>
<div style="position:absolute;left:1732.4px;top:1160.84px;font-size:25px;line-height:25px;color:#23282c;font-weight:700;white-space:nowrap;font-family:'Liberation Sans', sans-serif;will-change:transform;letter-spacing:0px">Action</div>
<div style="position:absolute;left:1906.3px;top:1160.84px;font-size:25px;line-height:25px;color:#23282c;font-weight:700;white-space:nowrap;font-family:'Liberation Sans', sans-serif;will-change:transform;letter-spacing:0px">Camera</div>
<div style="position:absolute;left:2108px;top:1160.84px;font-size:25px;line-height:25px;color:#23282c;font-weight:700;white-space:nowrap;font-family:'Liberation Sans', sans-serif;will-change:transform;letter-spacing:0px">Location</div>
<div style="position:absolute;left:2327.7px;top:1160.84px;font-size:25px;line-height:25px;color:#23282c;font-weight:700;white-space:nowrap;font-family:'Liberation Sans', sans-serif;will-change:transform;letter-spacing:0px">Speed</div>
<div style="position:absolute;left:2562.3px;top:1160.84px;font-size:25px;line-height:25px;color:#23282c;font-weight:700;white-space:nowrap;font-family:'Liberation Sans', sans-serif;will-change:transform;letter-spacing:0px">Date @ Time</div>
<div style="position:absolute;left:1906.3px;top:1216.84px;font-size:25px;line-height:25px;color:#23282c;font-weight:700;white-space:nowrap;font-family:'Liberation Sans', sans-serif;will-change:transform;">1</div>
<div style="position:absolute;left:2327.7px;top:1216.84px;font-size:25px;line-height:25px;color:#23282c;font-weight:400;white-space:nowrap;font-family:'Liberation Sans', sans-serif;will-change:transform;letter-spacing:0.1px">0 Mi/hr(s)</div>
<div style="position:absolute;left:2562.3px;top:1216.84px;font-size:25px;line-height:25px;color:#23282c;font-weight:400;white-space:nowrap;font-family:'Liberation Sans', sans-serif;will-change:transform;letter-spacing:0.08px">Sep 18th 2020 @ 10:40 AM</div>
<svg style="position:absolute;left:169px;top:1216px;" width="36" height="30" viewBox="0 0 36 30"><rect x="1.6" y="1.8" width="32.1" height="26.3" rx="2.6" fill="none" stroke="#50a8d5" stroke-width="2.3"/><circle cx="8.4" cy="8.8" r="3.5" fill="#50a8d5"/><path d="M5.1 23.7V20.1L10.6 14.8 13.4 17.3 22.5 8.4 30 15.5V23.7Z" fill="#50a8d5"/></svg>
<svg style="position:absolute;left:1731px;top:1218px;" width="34" height="25" viewBox="0 0 34 25"><rect x="0.5" y="0.5" width="23" height="23.5" rx="5" fill="#50a8d5"/><path d="M22 9.5L32.5 1.5V23.5L22 15.5Z" fill="#50a8d5"/></svg>
<svg style="position:absolute;left:631px;top:1214px;" width="28" height="34" viewBox="0 0 28 34"><circle cx="13.7" cy="4.9" r="3.9" fill="#50a8d5"/><path d="M8 11.5Q8 9.8 9.7 9.8H18.2Q19.9 9.8 19.9 11.5V18.3Q19.9 19.9 18.3 19.9H17.1V28H10.2V19.9H9.6Q8 19.9 8 18.3Z" fill="#50a8d5"/><path d="M8.8 25.1A11.5 3.6 0 1 0 18.9 25.1" fill="none" stroke="#50a8d5" stroke-width="2.2" stroke-linecap="round"/></svg>
<svg style="position:absolute;left:2193px;top:1214px;" width="28" height="34" viewBox="0 0 28 34"><circle cx="13.7" cy="4.9" r="3.9" fill="#50a8d5"/><path d="M8 11.5Q8 9.8 9.7 9.8H18.2Q19.9 9.8 19.9 11.5V18.3Q19.9 19.9 18.3 19.9H17.1V28H10.2V19.9H9.6Q8 19.9 8 18.3Z" fill="#50a8d5"/><path d="M8.8 25.1A11.5 3.6 0 1 0 18.9 25.1" fill="none" stroke="#50a8d5" stroke-width="2.2" stroke-linecap="round"/></svg>
<div style="position:absolute;left:100px;top:1479.95px;font-size:29px;line-height:29px;color:#23282c;font-weight:400;white-space:nowrap;font-family:'Liberation Sans', sans-serif;will-change:transform;letter-spacing:0.26px">&copy; 2020 Asritsolutions LLC.</div>
<div style="position:absolute;left:2777px;top:1480.80px;font-size:28px;line-height:28px;color:#23282c;font-weight:400;white-space:nowrap;font-family:'Liberation Sans', sans-serif;will-change:transform;letter-spacing:0.45px">Powered by <span style="color:#50a8d5">Asritsolutions LLC</span></div>
</body></html>
